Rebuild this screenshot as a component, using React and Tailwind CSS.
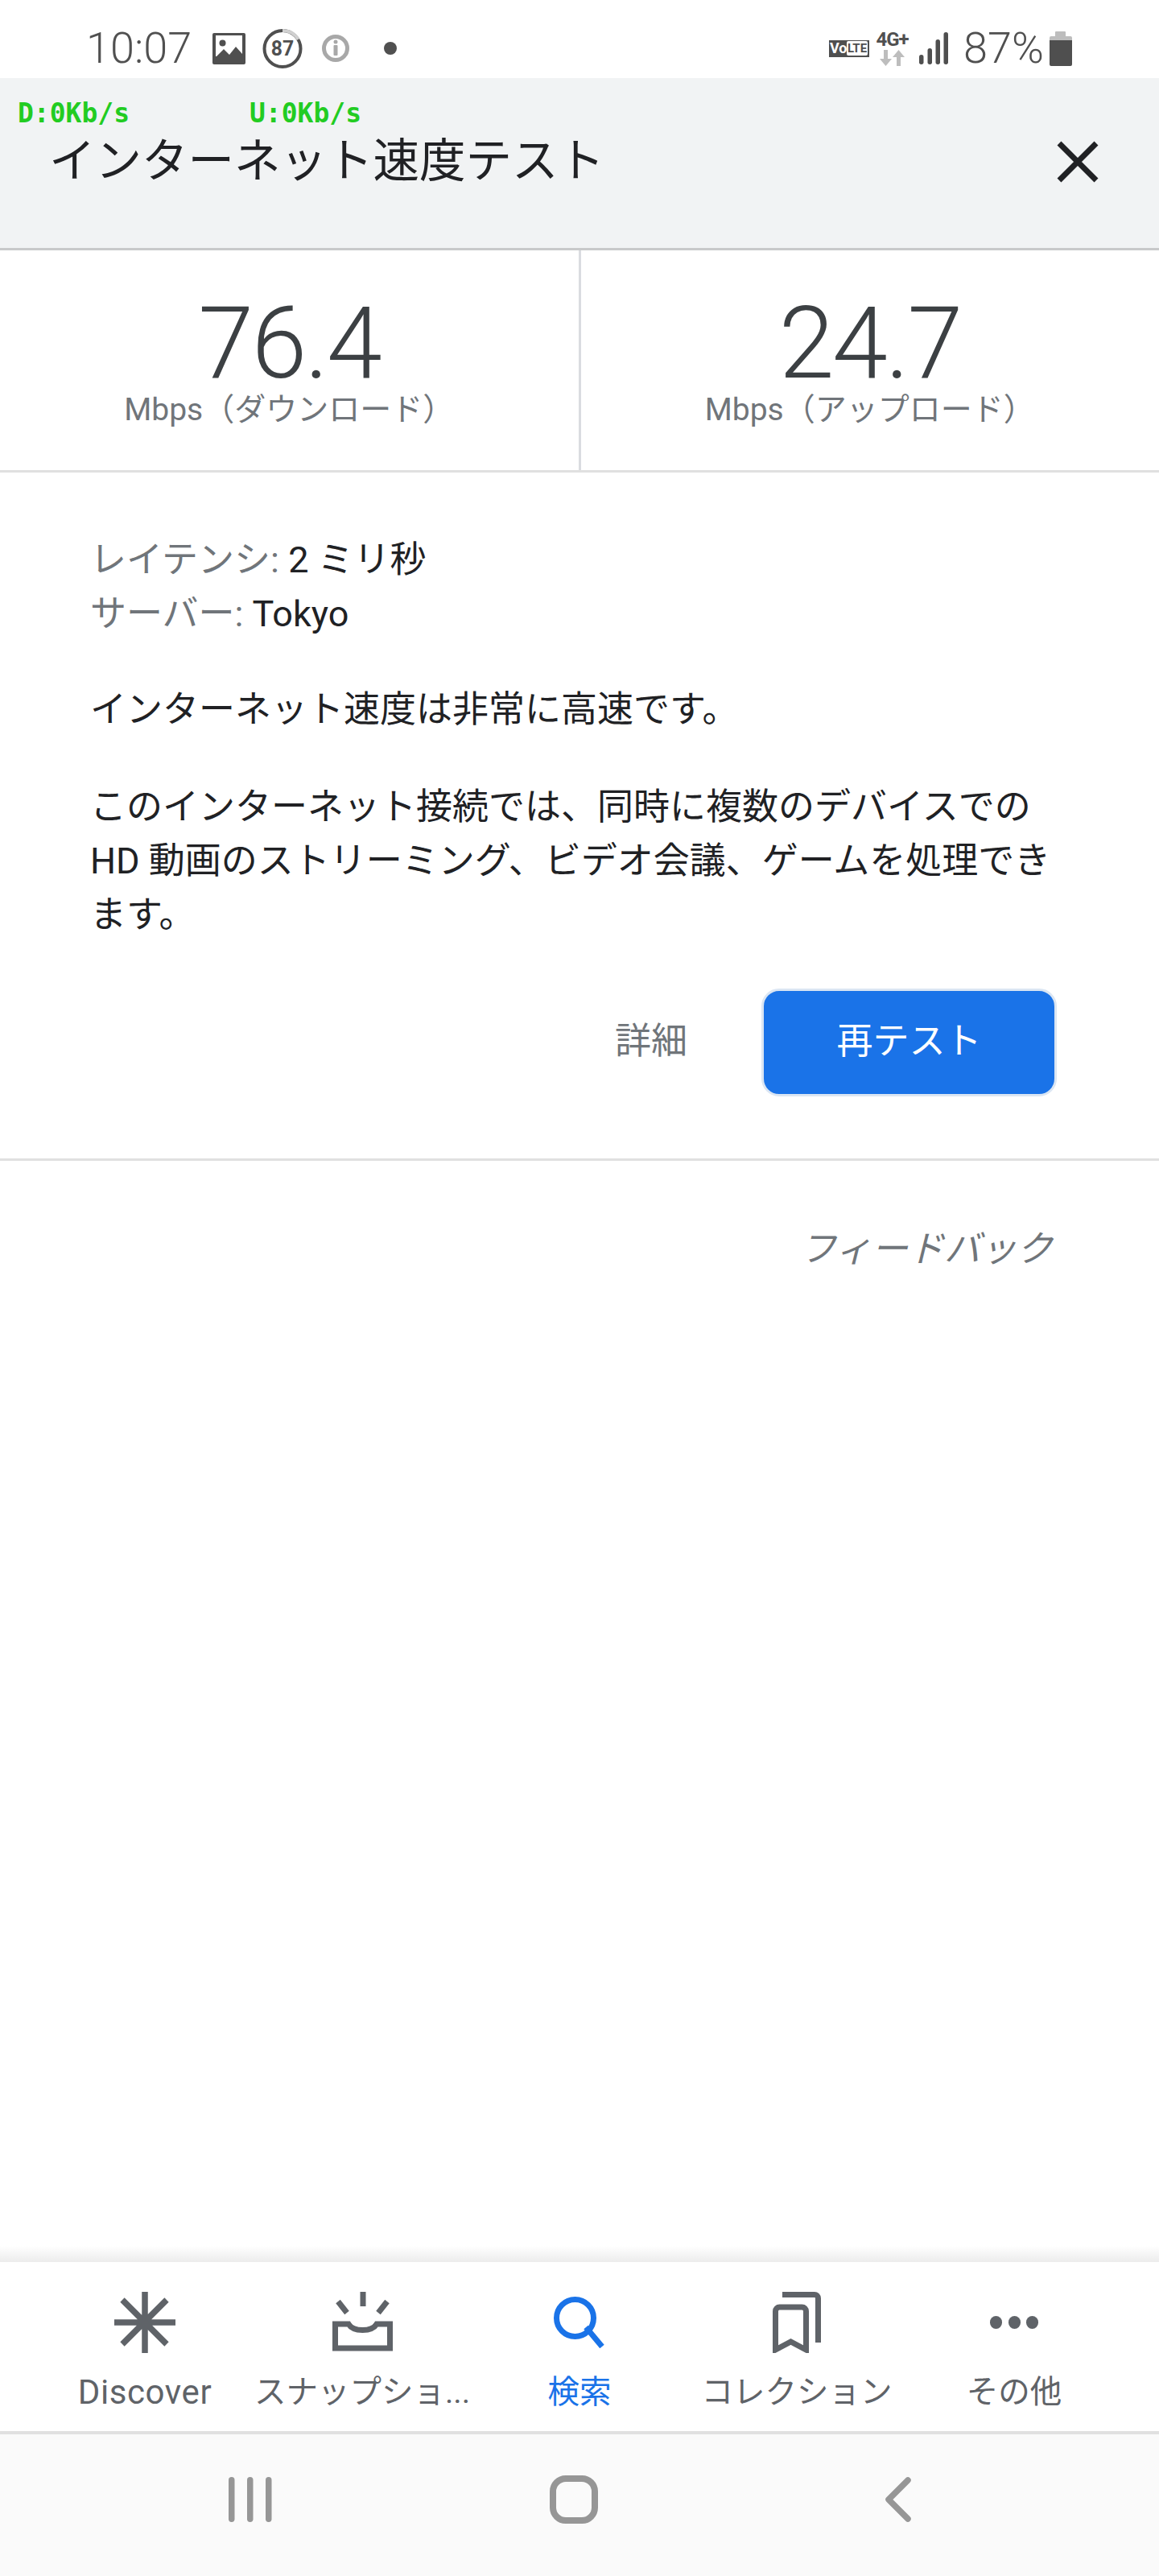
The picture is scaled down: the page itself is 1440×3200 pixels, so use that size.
const FONT = "font-['Roboto','Noto_Sans_CJK_JP',sans-serif]";

function ImageIcon() {
  return (
    <svg width="41" height="39" viewBox="0 0 41 39" className="block">
      <rect width="41" height="39" rx="2" fill="#4f4f4f" />
      <rect x="4" y="3" width="33" height="26" fill="#fff" />
      <circle cx="12.500" cy="12.500" r="4" fill="#4f4f4f" />
      <path d="M4 30l10-10 7 7 8-10 8 9v7H4z" fill="#4f4f4f" />
    </svg>
  );
}

function StatusBar() {
  return (
    <div className="h-[97px] bg-white flex items-center justify-between pl-[107px] pr-[108px] pt-[23px] text-[#505050]">
      <div className="flex items-center">
        <span className="w-[133px] text-[54px] leading-none font-light">10:07</span>
        <span className="ml-[24px]"><ImageIcon /></span>
        <span className="ml-[21px] relative w-[50px] h-[49px] flex items-center justify-center">
          <svg width="50" height="49" viewBox="0 0 50 49" className="absolute inset-0">
            <circle cx="25" cy="24.500" r="22.500" fill="none" stroke="#4f4f4f" strokeWidth="4" />
            <path d="M25 2A22.500 22.500 0 0 1 44.500 13" fill="none" stroke="#d0d0d0" strokeWidth="4" />
          </svg>
          <span className="relative text-[26px] font-bold leading-none scale-x-[0.95]">87</span>
        </span>
        <svg width="34" height="36" viewBox="0 0 34 36" className="ml-[24px]">
          <circle cx="17" cy="18" r="14.500" fill="none" stroke="#a8a8a8" strokeWidth="5" />
          <rect x="14.500" y="14" width="5" height="13" rx="1" fill="#a8a8a8" />
          <circle cx="17" cy="10" r="2.500" fill="#a8a8a8" />
        </svg>
        <span className="ml-[43px] w-[16px] h-[16px] rounded-full bg-[#505050]" />
      </div>
      <div className="flex items-center">
        <span className="flex items-center h-[21px] w-[50px] bg-[#4f4f4f] pl-[1px] text-[18px] font-bold text-white leading-none">
          <span className="w-[21px]">Vo</span>
          <span className="bg-white text-[#4f4f4f] h-[18px] w-[26px] rounded-[2px] text-[15px] flex items-center justify-center">LTE</span>
        </span>
        <span className="ml-[8px] w-[41px] flex flex-col items-center">
          <span className="text-[24px] font-bold leading-[21px] whitespace-nowrap tracking-[-1px]">4G+</span>
          <svg width="31" height="20" viewBox="0 0 31 20" className="mt-[2px]">
            <path d="M5 0h5v11h5l-7.500 9-7.500-9h5zM21 20h5V9h5l-7.500-9-7.500 9h5z" fill="#bdbdbd" />
          </svg>
        </span>
        <svg width="36" height="40" viewBox="0 0 36 40" className="ml-[13px]" fill="#4f4f4f">
          <rect x="0" y="28" width="5.500" height="12" rx="2.700" />
          <rect x="10.500" y="20" width="5.500" height="20" rx="2.700" />
          <rect x="20.500" y="9" width="5.500" height="31" rx="2.700" />
          <rect x="30.500" y="0" width="5.500" height="40" rx="2.700" />
        </svg>
        <span className="ml-[19px] w-[98px] text-[54px] leading-none font-light whitespace-nowrap">87%</span>
        <svg width="28" height="43" viewBox="0 0 28 43" className="ml-[9px]">
          <rect x="7" y="0" width="13" height="7" rx="1" fill="#bdbdbd" />
          <path d="M2 6h24a2 2 0 0 1 2 2v4H0V8a2 2 0 0 1 2-2z" fill="#bdbdbd" />
          <path d="M0 11h28v30a2 2 0 0 1-2 2H2a2 2 0 0 1-2-2z" fill="#4f4f4f" />
        </svg>
      </div>
    </div>
  );
}

function Header() {
  return (
    <div className="relative h-[214px] bg-[#f1f3f4] border-b-[3px] border-[#c8c9ca]">
      <div className="absolute left-[22px] top-[26px] flex font-['DejaVu_Sans_Mono','Liberation_Mono',monospace] text-[33px] leading-[36px] font-bold text-[#22cc22]">
        <span className="w-[288px]">D:0Kb/s</span>
        <span>U:0Kb/s</span>
      </div>
      <div className="flex items-center justify-between h-full pl-[61px] pr-[75px] pb-[18px] pt-[14px]">
        <h1 className="text-[57.500px] leading-none font-normal text-[#202124]">インターネット速度テスト</h1>
        <svg width="52" height="52" viewBox="0 0 52 52" fill="none" stroke="#202124" strokeWidth="7">
          <path d="M3 3l46 46M49 3L3 49" />
        </svg>
      </div>
    </div>
  );
}

function Speed({ value, label }) {
  return (
    <div className="flex-1 flex flex-col items-center pt-[54px]">
      <div className="text-[124px] leading-[124px] font-light tracking-[-2.500px] text-[#3c4043]">{value}</div>
      <div className="text-[39px] leading-[40px] text-[#70757a]">{label}</div>
    </div>
  );
}

function Tab({ icon, label, active, latin }) {
  const color = active ? 'text-[#1a73e8]' : 'text-[#5f6368]';
  const size = latin ? 'text-[42px] tracking-[0.600px]' : 'text-[39.500px]';
  return (
    <div className="flex-1 flex flex-col items-center pt-[37px]">
      <div className="h-[76px] flex items-center justify-center">{icon}</div>
      <div className={`mt-[27px] leading-[44px] whitespace-nowrap ${size} ${color}`}>{label}</div>
    </div>
  );
}

export default function App() {
  return (
    <div className={`${FONT} w-[1440px] h-[3200px] bg-white flex flex-col overflow-hidden`}>
      <StatusBar />
      <Header />

      <div className="flex h-[276px] border-b-[3px] border-[#e0e0e0]">
        <Speed value="76.4" label="Mbps（ダウンロード）" />
        <div className="w-[3px] bg-[#dadce0]" />
        <Speed value="24.7" label="Mbps（アップロード）" />
      </div>

      <div className="h-[855px] border-b-[3px] border-[#e0e0e0] pl-[112px] pr-[122px] pt-[75px] text-[45px] leading-[67px] text-[#202124]">
        <div><span className="text-[#70757a]">レイテンシ:</span> 2 ミリ秒</div>
        <div><span className="text-[#70757a]">サーバー:</span> Tokyo</div>
        <p className="mt-[52px]">インターネット速度は非常に高速です。</p>
        <p className="mt-[54px]">このインターネット接続では、同時に複数のデバイスでの HD 動画のストリーミング、ビデオ会議、ゲームを処理できます。</p>
        <div className="flex items-center justify-end mr-[5px] mt-[58px]">
          <span className="text-[#70757a] mr-[92px] mb-[4px]">詳細</span>
          <button className="w-[367px] h-[134px] rounded-[22px] bg-[#1a73e8] border-[3px] border-[#dbe6f3] text-white pb-[4px]">再テスト</button>
        </div>
      </div>

      <div className="flex-1 flex justify-end pr-[132px] pt-[80px]">
        <span className="text-[45px] leading-[60px] italic text-[#70757a]">フィードバック</span>
      </div>

      <div className="h-[20px] bg-gradient-to-b from-white to-[#ececec]" />
      <div className="h-[214px] flex bg-white px-[45px] border-b-[4px] border-[#e0e0e0]">
        <Tab
          latin
          label="Discover"
          icon={
            <svg width="76" height="76" viewBox="0 0 76 76" stroke="#5f6368" strokeWidth="7.500" fill="none">
              <path d="M38 0v76M0 38h76M10 10l55 55M65 10L10 65" />
            </svg>
          }
        />
        <Tab
          label="スナップショ..."
          icon={
            <svg width="75" height="76" viewBox="0 0 75 76" fill="none" stroke="#5f6368" strokeWidth="7">
              <path d="M38 0v18M7 12l11 14M68 12L57 26M3.500 40H20c6 10 29 10 35 0h16.500v30H3.500z" />
            </svg>
          }
        />
        <Tab
          active
          label="検索"
          icon={
            <svg width="65" height="64" viewBox="0 0 65 64" fill="none" stroke="#1a73e8" strokeWidth="7">
              <circle cx="26.500" cy="26.500" r="23" />
              <path d="M40 38l20 24" />
            </svg>
          }
        />
        <Tab
          label="コレクション"
          icon={
            <svg width="60" height="76" viewBox="0 0 60 76" fill="none" stroke="#5f6368" strokeWidth="7">
              <path d="M12 3.500h40a4.500 4.500 0 0 1 4.500 4.500v55" />
              <path d="M3.500 72V24a5 5 0 0 1 5-5h28a5 5 0 0 1 5 5v48l-19-10z" />
            </svg>
          }
        />
        <Tab
          label="その他"
          icon={
            <div className="flex gap-[7.500px]">
              <span className="w-[15px] h-[16px] rounded-full bg-[#5f6368]" />
              <span className="w-[15px] h-[16px] rounded-full bg-[#5f6368]" />
              <span className="w-[15px] h-[16px] rounded-full bg-[#5f6368]" />
            </div>
          }
        />
      </div>

      <div className="h-[176px] bg-[#fafafa] grid grid-cols-3 items-center justify-items-center pl-[110px] pr-[124px] pb-[14px]">
        <svg width="54" height="56" viewBox="0 0 54 56" fill="#969696">
          <rect x="0" y="0" width="7.500" height="56" rx="3.700" />
          <rect x="23" y="0" width="7.500" height="56" rx="3.700" />
          <rect x="46" y="0" width="7.500" height="56" rx="3.700" />
        </svg>
        <svg width="60" height="60" viewBox="0 0 60 60" fill="none" stroke="#969696" strokeWidth="8">
          <rect x="4" y="4" width="52" height="52" rx="16" />
        </svg>
        <svg width="33" height="56" viewBox="0 0 33 56" fill="none" stroke="#969696" strokeWidth="7.500" strokeLinecap="round" strokeLinejoin="round">
          <path d="M29 4L5 28l24 24" />
        </svg>
      </div>
    </div>
  );
}
